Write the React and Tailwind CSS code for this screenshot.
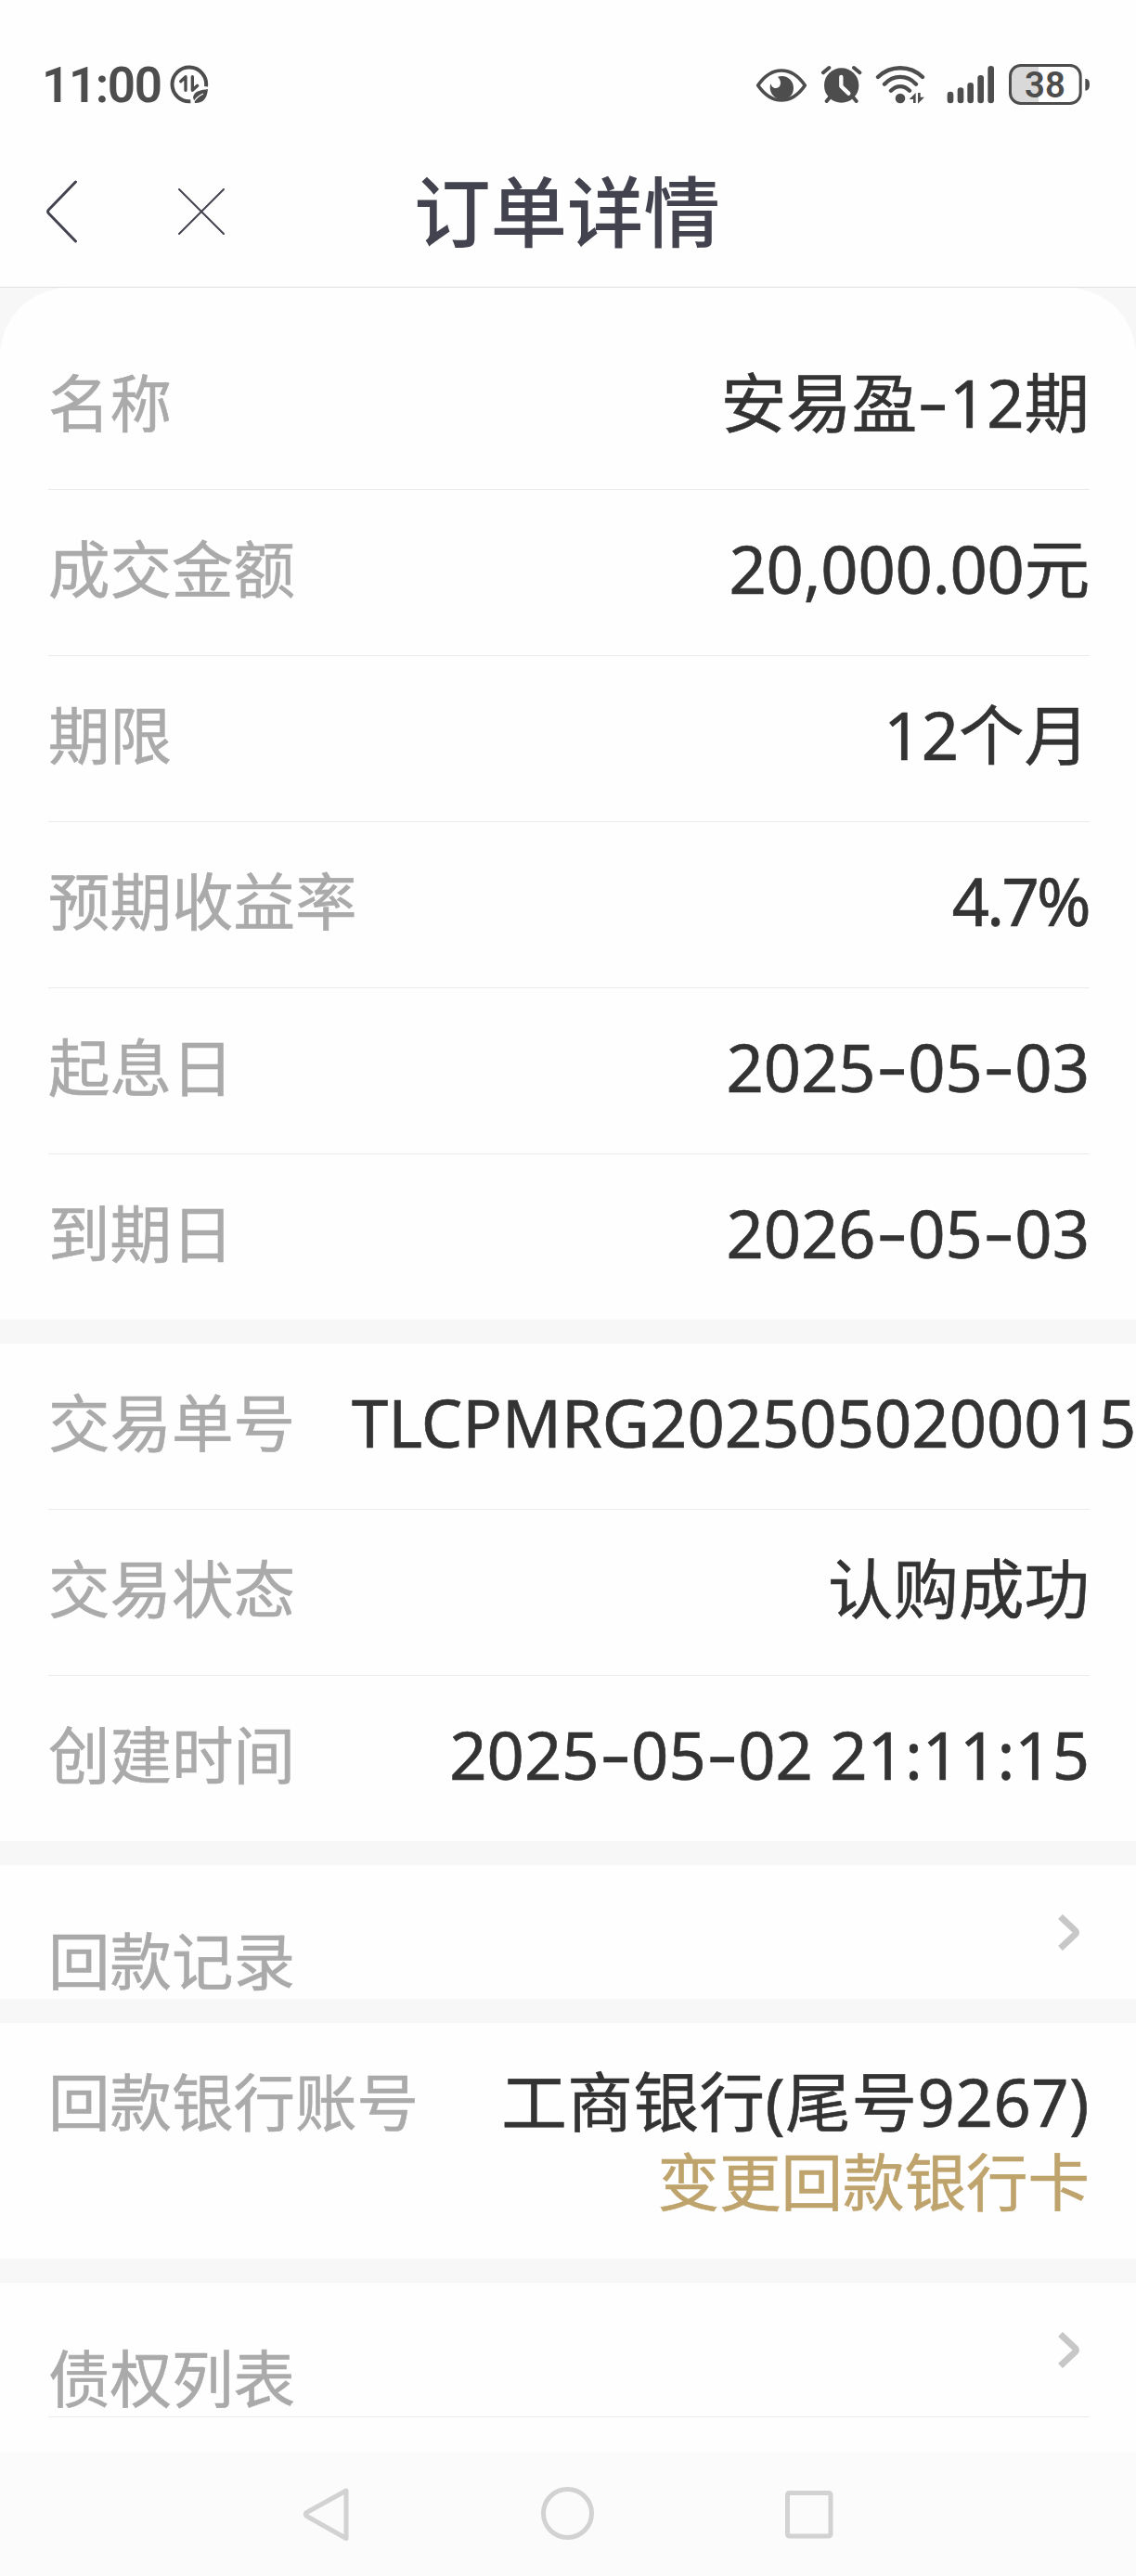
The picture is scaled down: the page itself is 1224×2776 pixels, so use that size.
import clsx from 'clsx';

const orderRows = [
  { label: '名称', value: '安易盈-12期' },
  { label: '成交金额', value: '20,000.00元', tracking: 'tracking-[-0.2px]' },
  { label: '期限', value: '12个月' },
  { label: '预期收益率', value: '4.7%', tracking: 'tracking-[-2.700px] pr-[1px]' },
  { label: '起息日', value: '2025-05-03' },
  { label: '到期日', value: '2026-05-03' },
];

const tradeRows = [
  { label: '交易单号', value: 'TLCPMRG2025050200015', overflow: true },
  { label: '交易状态', value: '认购成功' },
  { label: '创建时间', value: '2025-05-02 21:11:15' },
];

function DataSaverIcon() {
  return (
    <svg className="w-[43px] h-[43px]" viewBox="546 90 129 129" fill="none">
      <path d="M666 160A55 55 0 1 0 616 207.500" stroke="#4d4d4d" strokeWidth="12" />
      <path d="M600 172V128L584 143M622 128V172L638 157" stroke="#4d4d4d" strokeWidth="10" strokeLinejoin="round" strokeLinecap="round" />
      <path d="M672 168C650 171 627 174 624 195L630 213C656 214 669 200 672 168Z" fill="#4d4d4d" />
      <path d="M624 213C632 199 643 189 657 183" stroke="#fefefe" strokeWidth="4" />
    </svg>
  );
}

function EyeIcon() {
  return (
    <svg className="w-14 h-10" viewBox="42 60 168 120" fill="none">
      <path d="M50 123C70 94 96 75 126 75C156 75 182 94 202 123C182 152 156 171 126 171C96 171 70 152 50 123Z" stroke="#4d4d4d" strokeWidth="11" strokeLinejoin="round" />
      <path d="M114 95C142 86 165 106 165 131C165 154 149 168 128 168C106 168 89 152 89 129C89 125 90 121 91 117C94 128 101 133 109 132C124 130 129 111 114 95Z" fill="#4d4d4d" />
    </svg>
  );
}

function AlarmIcon() {
  return (
    <svg className="w-[45px] h-[42px]" viewBox="252 60 135 126" fill="none" strokeLinecap="round">
      <circle cx="320" cy="126" r="56" fill="#4d4d4d" />
      <path d="M261 85L280 69M379 85L360 69M282 165L272 177M358 165L368 177" stroke="#4d4d4d" strokeWidth="12" />
      <path d="M319 99V129L343 152" stroke="#fefefe" strokeWidth="13" strokeLinejoin="round" />
    </svg>
  );
}

function WifiIcon() {
  return (
    <svg className="w-[54px] h-[42px]" viewBox="429 60 162 126" fill="none" strokeLinecap="round">
      <path d="M438 99C479 60 541 60 582 99M459 122C488 91 532 91 561 122M480 143C498 125 522 125 540 143" stroke="#4d4d4d" strokeWidth="13" />
      <circle cx="510" cy="168" r="16" fill="#4d4d4d" />
      <path d="M539 171L560 150V183H552V171ZM588 164L567 185V150H575V164Z" fill="#4d4d4d" />
    </svg>
  );
}

function SignalIcon() {
  return (
    <svg className="w-[52px] h-[42px]" viewBox="660 60 156 126" stroke="#4d4d4d" strokeWidth="20" strokeLinecap="round">
      <path d="M672 156V174M705 143V174M737 127V174M770 103V174M803 73V174" />
    </svg>
  );
}

function BatteryIcon() {
  return (
    <svg className="w-[89px] h-[46px]" viewBox="858 54 267 138">
      <path d="M957 62H899Q866 62 866 95V150Q866 183 899 183H957Z" fill="#d9d9d9" />
      <rect x="865.5" y="61.5" width="227" height="123" rx="34" fill="none" stroke="#4d4d4d" strokeWidth="9" />
      <path d="M1108 104Q1122 104 1122 123Q1122 143 1108 143Z" fill="#4d4d4d" />
      <text x="978" y="164" textAnchor="middle" fontFamily="Roboto, sans-serif" fontWeight="600" fontSize="115" fill="#4d4d4d">38</text>
    </svg>
  );
}

function Chevron() {
  return (
    <svg className="w-6 h-[39px]" viewBox="0 0 24 39" fill="none" stroke="#c7c7c7" strokeWidth="7">
      <path d="M2.500 2.500L18.500 17.500Q20.500 19.500 18.500 21.500L2.500 36.500" />
    </svg>
  );
}

// The handset font draws a wide, raised hyphen
function Value({ text }) {
  return text.split('-').map((part, i) => (
    <span key={i}>
      {i > 0 && (
        <span className="inline-block w-[34.500px] text-center scale-x-[1.45] -translate-y-[3px]">-</span>
      )}
      {part}
    </span>
  ));
}

function Label({ children }) {
  return (
    <span className="text-[66.500px] leading-[80px] text-[#aaaaaa] whitespace-nowrap [-webkit-text-stroke:0.6px]">
      {children}
    </span>
  );
}

function Row({ label, value, tracking, overflow, last }) {
  return (
    <div className={clsx('h-[179px] pb-[9px] flex items-center justify-between', !last && 'border-b border-[#ebebeb]')}>
      <Label>{label}</Label>
      <span
        className={clsx(
          'text-[70.500px] leading-[80px] text-[#333333] whitespace-nowrap [-webkit-text-stroke:0.6px]',
          tracking,
          overflow && 'w-[795px] shrink-0'
        )}
      >
        <Value text={value} />
      </span>
    </div>
  );
}

function StatusBar() {
  return (
    <div className="h-[150px] pt-[68px] pl-[45px] pr-[49px] flex items-start justify-between">
      <div className="flex items-center h-[46px]">
        <span className="w-[137px] pt-[2px] font-['Roboto'] font-semibold text-[53px] leading-[46px] tracking-[-1.400px] text-[#4d4d4d]">11:00</span>
        <DataSaverIcon />
      </div>
      <div className="flex items-center h-[46px]">
        <EyeIcon />
        <span className="ml-[14px]"><AlarmIcon /></span>
        <span className="ml-[14px]"><WifiIcon /></span>
        <span className="ml-[23px]"><SignalIcon /></span>
        <span className="ml-[14px]"><BatteryIcon /></span>
      </div>
    </div>
  );
}

function Header() {
  return (
    <div className="h-[160px] pb-[3px] border-b border-[#e0e0e0] grid grid-cols-[1fr_auto_1fr] items-center">
      <div className="flex items-center gap-[106px] pl-[48px]">
        <svg className="w-[37px] h-[70px]" viewBox="0 0 37 70" fill="none" stroke="#43434f" strokeWidth="3" strokeLinecap="round">
          <path d="M33.500 3L4.500 33Q2.500 35 4.500 37L33.500 67" />
        </svg>
        <svg className="w-[52px] h-[52px]" viewBox="0 0 52 52" stroke="#43434f" strokeWidth="2" strokeLinecap="round">
          <path d="M2 2L50 50M50 2L2 50" />
        </svg>
      </div>
      <h1 className="mr-[2px] text-[82.500px] leading-[100px] font-medium text-[#43434f]">订单详情</h1>
      <div />
    </div>
  );
}

function NavBar() {
  return (
    <div className="h-[134px] bg-[#fbfbfb] flex justify-center">
      <svg className="w-[600px] h-[134px]" viewBox="312 2642 600 134" fill="none" stroke="#d2d2d2" strokeWidth="5" strokeLinejoin="round">
        <path d="M373 2684V2735.500L330.500 2711.500Q328 2709.500 330.500 2707.500Z" />
        <circle cx="611.500" cy="2708.500" r="26" />
        <rect x="848.500" y="2686.500" width="46.500" height="46.500" rx="2" />
      </svg>
    </div>
  );
}

export default function App() {
  return (
    <div className="w-[1224px] h-[2776px] overflow-hidden bg-[#fefefe] font-['Noto_Sans','Noto_Sans_CJK_SC',sans-serif] flex flex-col">
      <StatusBar />
      <Header />

      <div className="h-[2332px] bg-[#f7f7f7] flex flex-col gap-[26px]">
        <section className="h-[1112px] bg-[#fefefe] rounded-t-[74px] pl-[52px] pr-[50px] pt-[39px]">
          {orderRows.map((row, i) => (
            <Row key={row.label} {...row} last={i === orderRows.length - 1} />
          ))}
        </section>

        <section className="h-[536px] bg-[#fefefe] pl-[52px] pr-[50px]">
          {tradeRows.map((row, i) => (
            <Row key={row.label} {...row} last={i === tradeRows.length - 1} />
          ))}
        </section>

        <section className="h-[144px] bg-[#fefefe] pl-[52px] pr-[60px] flex justify-between">
          <div className="pt-[63px]"><Label>回款记录</Label></div>
          <div className="pt-[53px]"><Chevron /></div>
        </section>

        <section className="h-[254px] bg-[#fefefe] pl-[52px] pr-[50px] pt-[45px] flex justify-between">
          <Label>回款银行账号</Label>
          <div className="flex flex-col items-end whitespace-nowrap [-webkit-text-stroke:0.6px]">
            <span className="text-[70.500px] leading-[80px] tracking-[0.600px] text-[#333333]">工商银行(尾号9267)</span>
            <span className="mt-[6px] text-[66.500px] leading-[80px] text-[#bea36c]">变更回款银行卡</span>
          </div>
        </section>

        <section className="h-[182px] bg-[#fefefe] pl-[52px] pr-[50px]">
          <div className="h-[145px] pr-[10px] border-b border-[#ebebeb] flex justify-between">
            <div className="pt-[63px]"><Label>债权列表</Label></div>
            <div className="pt-[53px]"><Chevron /></div>
          </div>
        </section>
      </div>

      <NavBar />
    </div>
  );
}
